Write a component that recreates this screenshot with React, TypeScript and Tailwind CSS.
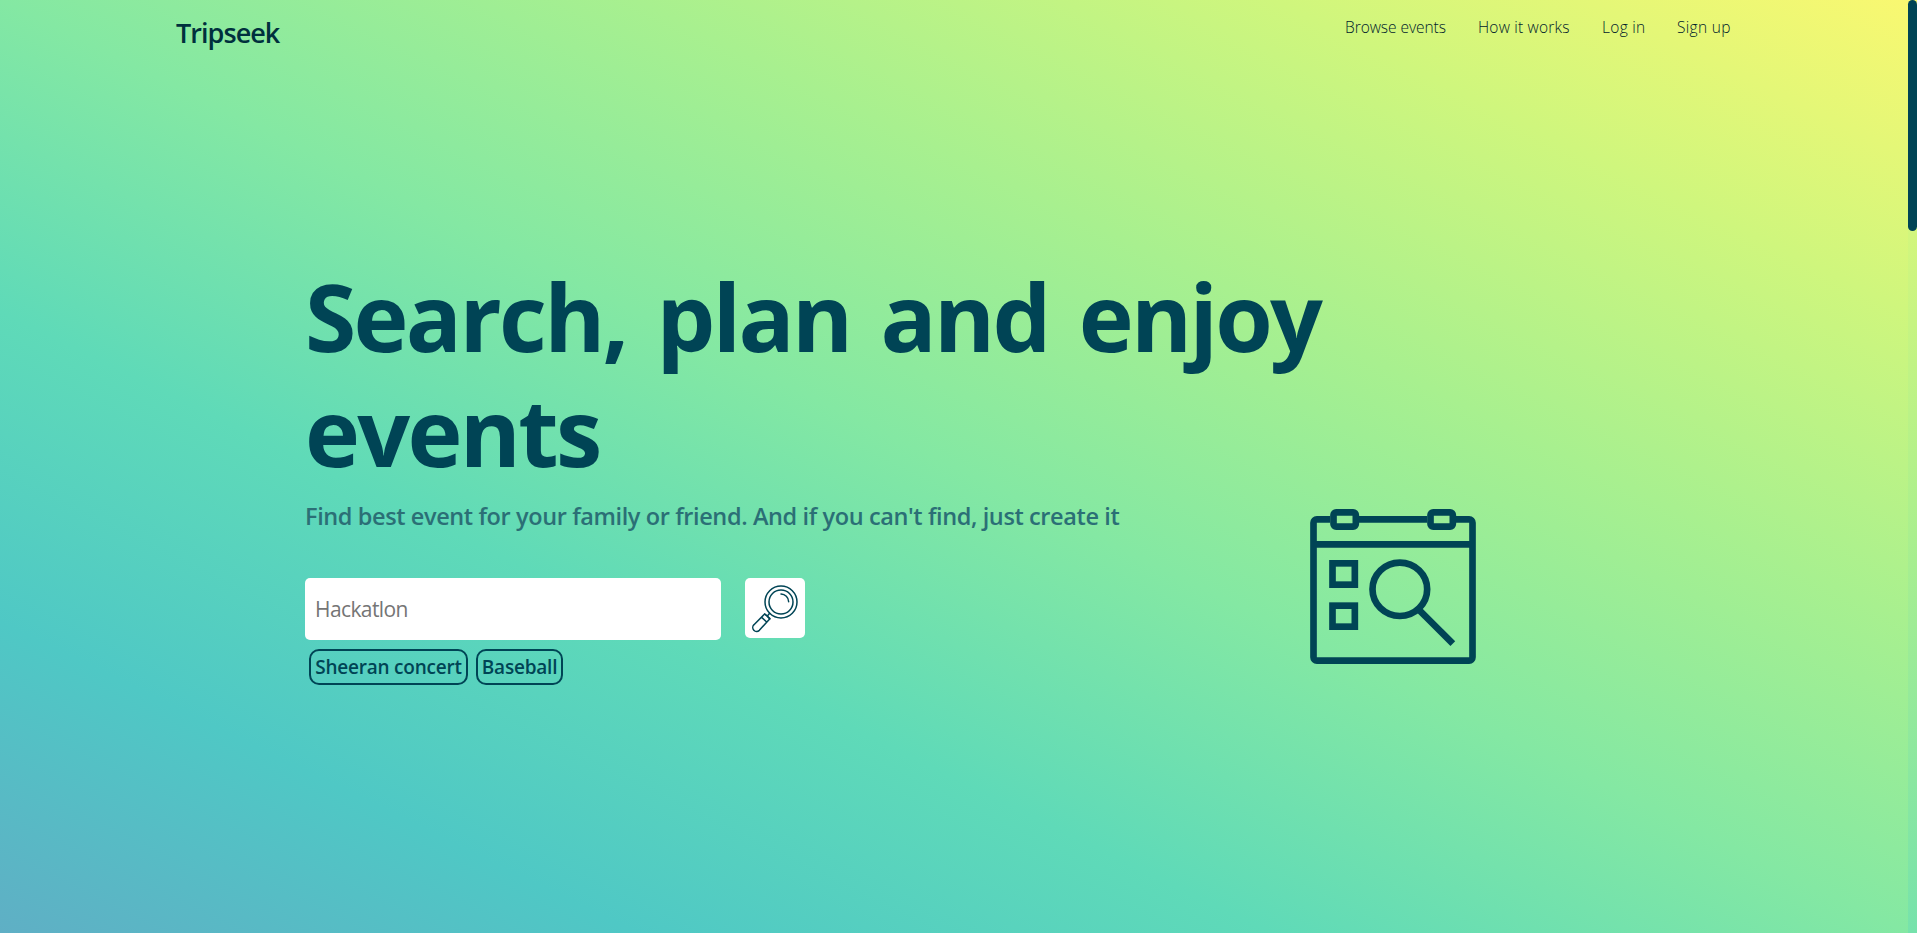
import type { InputHTMLAttributes } from "react";

const navLinks = [
  { label: "Browse events", className: "w-[133px] tracking-[-0.05px]" },
  { label: "How it works", className: "w-[124px] tracking-[0.2px]" },
  { label: "Log in", className: "w-[75px] tracking-[0.3px]" },
  { label: "Sign up", className: "w-[55px] tracking-[0.3px]" },
];

const Header = () => (
  <header className="flex h-16 items-start justify-between pl-[176px] pr-[176px]">
    <a
      href="#"
      className="pt-[15px] text-[27px] leading-9 font-semibold tracking-[-0.95px] text-[#00303d]"
    >
      Tripseek
    </a>
    <nav className="flex pt-[15px] text-[15.5px] leading-6 font-light text-[#00222c]">
      {navLinks.map(({ label, className }) => (
        <a key={label} href="#" className={`whitespace-nowrap ${className}`}>
          {label}
        </a>
      ))}
    </nav>
  </header>
);

const MagnifierIcon = () => (
  <svg
    viewBox="0 0 180 180"
    className="size-[60px]"
    fill="none"
    stroke="#004455"
    strokeWidth="4.5"
    strokeLinecap="round"
    strokeLinejoin="round"
  >
    <circle cx="108" cy="72" r="48" />
    <circle cx="108" cy="72" r="36" />
    <path d="M108 48a24 24 0 0 1 23 23" />
    <path d="M74 106l-7 8M67 114l-8-6-32 32a10.500 10.500 0 0 0 16 17l31-34zM50 118l15 14" />
    <path d="M59 108l16 14" />
  </svg>
);

const CalendarSearchIcon = () => (
  <svg
    viewBox="60 57 497 465"
    className="h-[155px] w-[166px]"
    fill="none"
    stroke="#004455"
    strokeWidth="20"
  >
    <path d="M120 88H80a10 10 0 0 0-10 10V502a10 10 0 0 0 10 10H537a10 10 0 0 0 10-10V98a10 10 0 0 0-10-10H497M206 88H411M70 163H547" />
    <rect x="130" y="67" width="67" height="43" rx="8" />
    <rect x="421" y="67" width="67" height="43" rx="8" />
    <rect x="127" y="220" width="67" height="64" />
    <rect x="127" y="347" width="67" height="63" />
    <ellipse cx="329" cy="298" rx="82" ry="80" />
    <path d="M385 358L488 461" />
  </svg>
);

const SearchInput = (props: InputHTMLAttributes<HTMLInputElement>) => (
  <input
    type="text"
    className="h-[62px] w-[416px] rounded-[5px] bg-white px-2.5 text-[21px] font-normal tracking-[-0.6px] placeholder:text-[#757575]"
    {...props}
  />
);

const Tag = ({ label, className }: { label: string; className: string }) => (
  <button
    className={`h-[36px] rounded-[10px] border-2 border-[#004455] text-[19px] leading-8 font-semibold tracking-[-0.22px] whitespace-nowrap text-[#004455] ${className}`}
  >
    {label}
  </button>
);

const Hero = () => (
  <main className="flex pt-[195px] pl-[305px]">
    <section className="w-[1005px]">
      <h1 className="text-[93px] leading-[115px] font-bold tracking-[-2.65px] whitespace-nowrap text-[#004455] [word-spacing:8.500px]">
        Search, plan and enjoy
        <br />
        events
      </h1>
      <p className="mt-[9px] text-[23.5px] leading-9 font-semibold tracking-[-0.39px] whitespace-nowrap text-[#2b6f76]">
        Find best event for your family or friend. And if you can't find, just
        create it
      </p>
      <div className="mt-11 flex h-[62px] items-start gap-6">
        <SearchInput placeholder="Hackatlon" />
        <button className="rounded-[5px] bg-white">
          <MagnifierIcon />
        </button>
      </div>
      <div className="mt-[9px] ml-1 flex gap-2">
        <Tag label="Sheeran concert" className="w-[159px]" />
        <Tag label="Baseball" className="w-[87px]" />
      </div>
    </section>
    <div className="pt-[250px]">
      <CalendarSearchIcon />
    </div>
  </main>
);

export default function App() {
  return (
    <div className="flex h-[933px] w-full overflow-hidden bg-[#84e8a3] font-['Open_Sans',sans-serif]">
      <div className="w-[1908px] bg-[linear-gradient(to_right_top,#5fafc5,#4fc8c5,#5fdab8,#84e8a3,#a8f08f,#cff67d,#f9f871)]">
        <Header />
        <Hero />
      </div>
      {/* scrollbar */}
      <div className="w-[9px] bg-[linear-gradient(to_top,#76e2ac,#aef08c_46%,#d2f67d_75%,#f9f871)]">
        <div className="h-[231px] rounded-[5px] bg-[#004455]" />
      </div>
    </div>
  );
}
